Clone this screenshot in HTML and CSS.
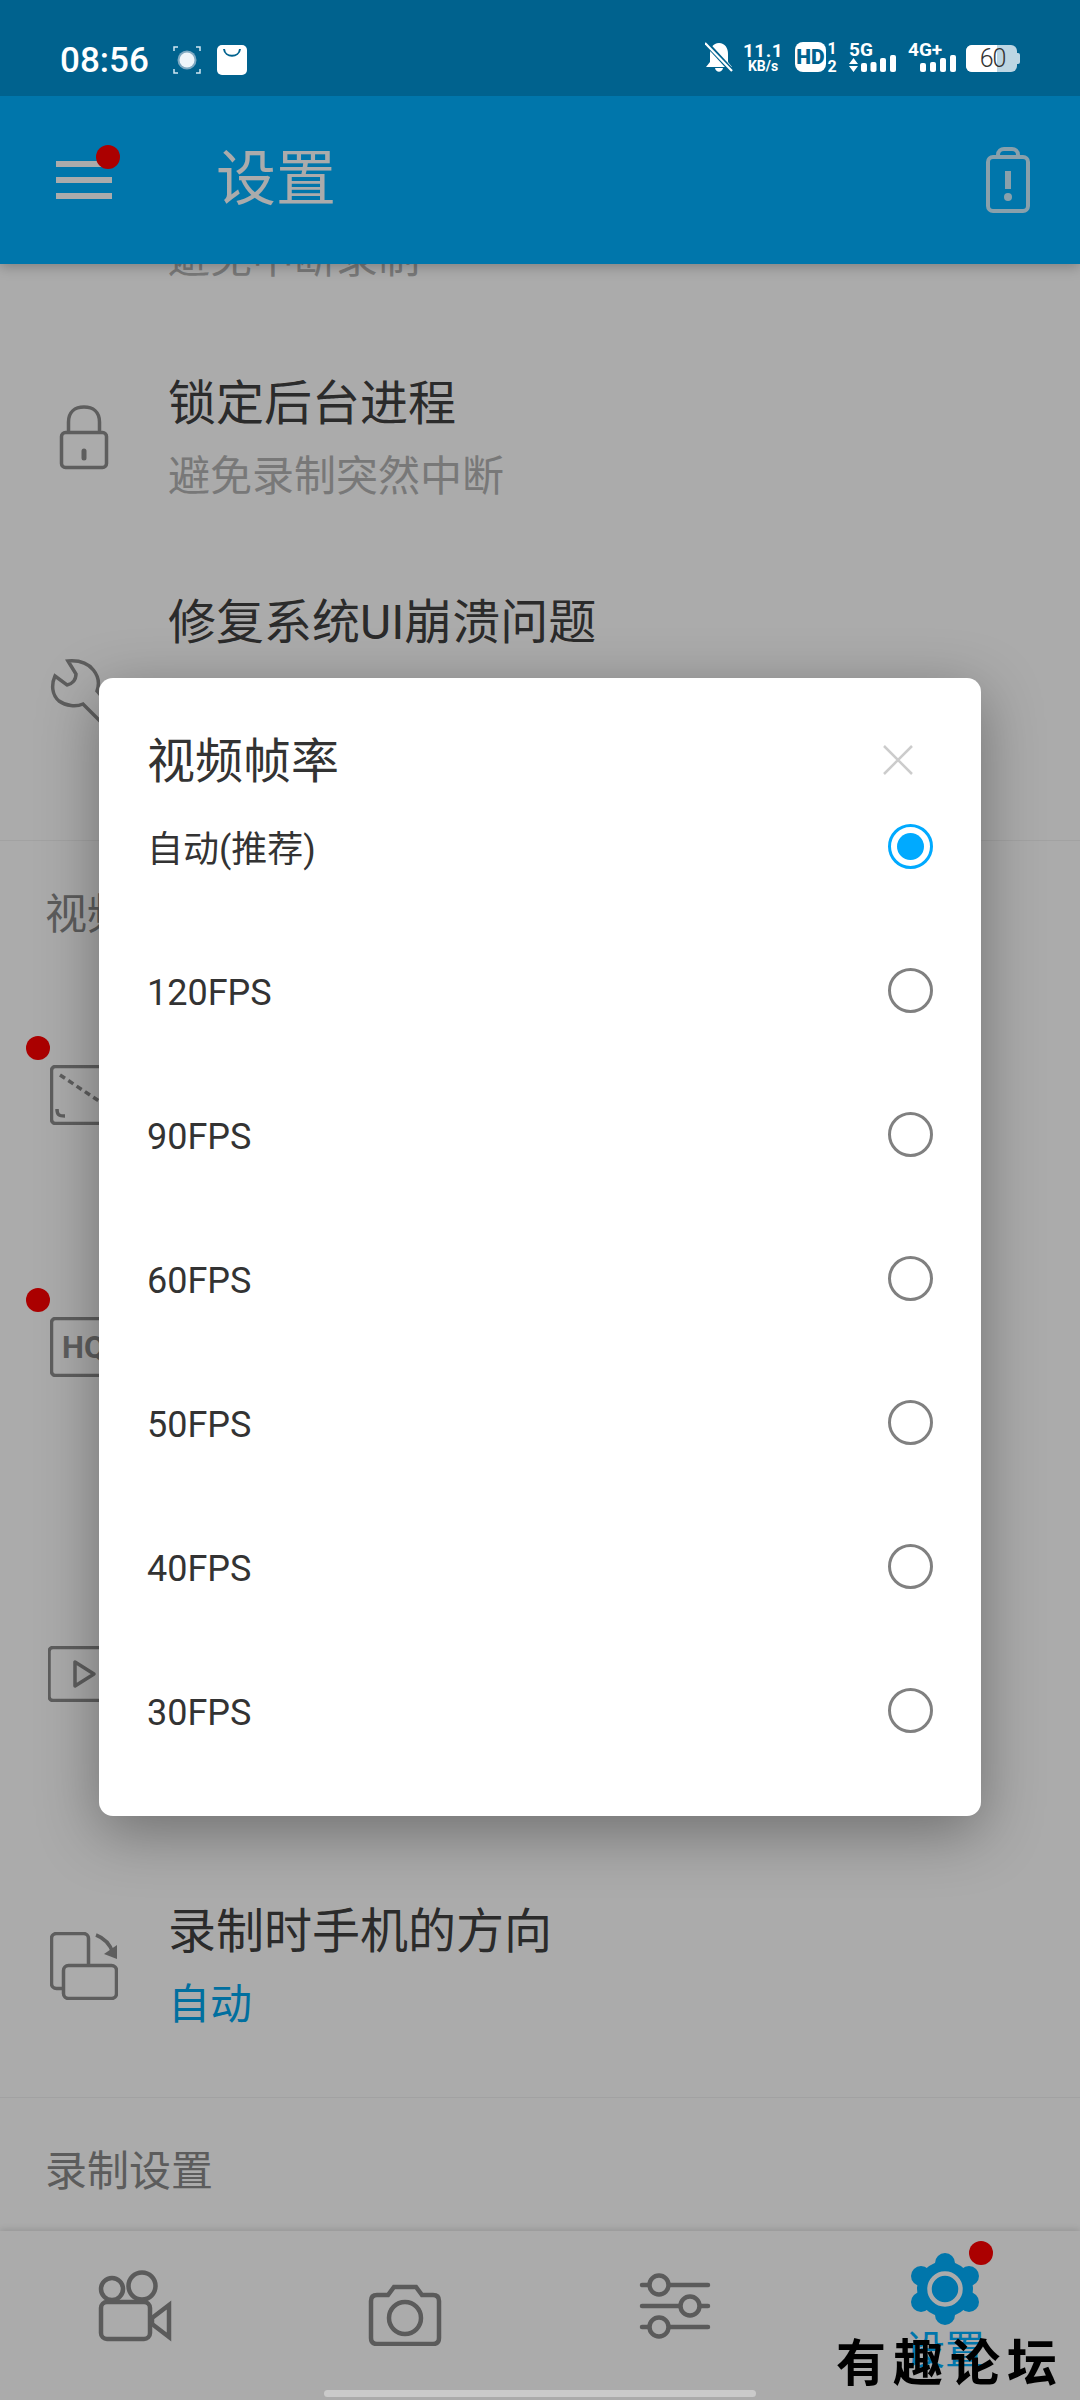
FILE: index.html
```html
<!DOCTYPE html>
<html lang="zh-CN">
<head>
    <meta charset="UTF-8">
    <meta name="viewport" content="width=device-width, initial-scale=1.0">
    <title>设置</title>
    <link rel="stylesheet" href="styles.css">
</head>
<body>
    <div class="page">
        <!-- Status bar stays above the dialog scrim -->
        <div class="status-bar">
            <div class="status-left">
                <span class="clock">08:56</span>
                <svg width="28" height="30" viewBox="0 0 28 30" fill="none">
                    <path d="M1 6V2H5M23 2H27V6M27 24V28H23M5 28H1V24" stroke="#cfe6f2" stroke-width="1.5"/>
                    <circle cx="14" cy="15" r="9.5" fill="#7fa9c2"/>
                    <circle cx="14" cy="15" r="7.5" fill="#eef5fa"/>
                </svg>
                <svg width="30" height="30" viewBox="0 0 30 30">
                    <rect width="30" height="30" rx="5" fill="#fff"/>
                    <path d="M7 4C8 13 22 13 23 4" fill="none" stroke="#00628e" stroke-width="2"/>
                </svg>
            </div>
            <div class="status-right">
                <svg width="28" height="42" viewBox="0 -6 28 42">
                    <path d="M14 1C8 1 5 6 5 12V20L1 25H27L23 20V12C23 6 20 1 14 1ZM10 26C11 31 17 31 18 26Z" fill="#fff"/>
                    <path d="M1 1L27 29" stroke="#00628e" stroke-width="5"/>
                    <path d="M0 1L27 29" stroke="#fff" stroke-width="2.2"/>
                </svg>
                <div class="speed">
                    <span class="speed-value">11.1</span>
                    <span class="speed-unit">KB/s</span>
                </div>
                <svg class="status-hd" width="42" height="42" viewBox="0 -6 42 42">
                    <rect width="31" height="30" rx="8" fill="#fff"/>
                    <text x="15.5" y="22" class="sb-text sb-hd" text-anchor="middle">HD</text>
                    <text x="37" y="12" class="sb-text sb-small" text-anchor="middle">1</text>
                    <text x="37" y="30" class="sb-text sb-small" text-anchor="middle">2</text>
                </svg>
                <svg width="47" height="42" viewBox="0 -6 47 42">
                    <text x="0" y="14" class="sb-text sb-net">5G</text>
                    <path d="M0 22L4.500 16L9 22ZM0 24H9L4.500 30Z" fill="#fff"/>
                    <rect x="12" y="21" width="6" height="9" rx="2" fill="#fff"/>
                    <rect x="21.500" y="20" width="6" height="10" rx="2" fill="#fff"/>
                    <rect x="31" y="16" width="6" height="14" rx="2" fill="#fff"/>
                    <rect x="41" y="13" width="6" height="17" rx="2" fill="#fff"/>
                </svg>
                <svg width="49" height="42" viewBox="0 -6 49 42">
                    <text x="0" y="14" class="sb-text sb-net">4G+</text>
                    <rect x="12" y="21" width="6" height="9" rx="2" fill="#fff"/>
                    <rect x="22" y="20" width="6" height="10" rx="2" fill="#fff"/>
                    <rect x="32" y="16" width="6" height="14" rx="2" fill="#fff"/>
                    <rect x="42" y="13" width="6" height="17" rx="2" fill="#fff"/>
                </svg>
                <div class="battery">
                    <div class="battery-fill"></div>
                    <span class="battery-text">60</span>
                </div>
            </div>
        </div>

        <div class="app-bar">
            <div class="menu-btn">
                <span class="menu-line"></span>
                <span class="menu-line"></span>
                <span class="menu-line"></span>
                <span class="dot dot-menu"></span>
            </div>
            <div class="app-title">设置</div>
            <svg class="battery-warn" width="44" height="66" viewBox="0 0 44 66" fill="none" stroke="#fff" stroke-width="4">
                <rect x="2" y="10" width="40" height="54" rx="5"/>
                <path d="M12 10V8C12 4 15 2 18 2H26C29 2 32 4 32 8V10"/>
                <path d="M22 24V42" stroke-width="6"/>
                <circle cx="22" cy="50" r="4" fill="#fff" stroke="none"/>
            </svg>
        </div>

        <div class="content">
            <div class="list">
                <div class="row row-cut">
                    <div class="row-icon"></div>
                    <div class="row-text">
                        <div class="row-sub">避免中断录制</div>
                    </div>
                </div>

                <div class="row">
                    <svg class="row-icon" width="68" height="68" viewBox="0 0 68 68">
                        <rect x="11.500" y="28.500" width="45" height="35" rx="4"/>
                        <path d="M18.500 28V18C18.500 8 25 3 34 3C43 3 49.500 8 49.500 18V28"/>
                        <path d="M34 47V54" stroke-width="5" stroke-linecap="round"/>
                    </svg>
                    <div class="row-text">
                        <div class="row-title">锁定后台进程</div>
                        <div class="row-sub">避免录制突然中断</div>
                    </div>
                </div>

                <div class="row row-tall row-line">
                    <svg class="row-icon" width="68" height="68" viewBox="0 0 68 68">
                        <path d="M18 2L26 15C26 21 22 25 17 26L5 17C1 26 2 36 9 42C16 47 26 48 33 45L54 66L66 54L47 32C52 18 42 0 18 2Z"/>
                    </svg>
                    <div class="row-text">
                        <div class="row-title">修复系统UI崩溃问题</div>
                        <div class="row-sub">避免系统界面崩溃导致录制中断</div>
                    </div>
                </div>

                <div class="section">视频设置</div>

                <div class="row row-size">
                    <div class="icon-wrap">
                        <svg class="row-icon" width="68" height="60" viewBox="0 0 68 60">
                            <rect x="1.500" y="1.500" width="65" height="57" rx="4"/>
                            <path d="M10 10L58 42" stroke-dasharray="6 4"/>
                            <path d="M7 44C7 50 9 51 15 51"/>
                        </svg>
                        <span class="dot dot-icon"></span>
                    </div>
                </div>

                <div class="row row-quality">
                    <div class="icon-wrap">
                        <svg class="row-icon" width="68" height="60" viewBox="0 0 68 60">
                            <rect x="1.500" y="1.500" width="65" height="57" rx="4"/>
                            <text x="12" y="41" class="hq-text">HQ</text>
                        </svg>
                        <span class="dot dot-icon"></span>
                    </div>
                </div>

                <div class="row row-rate">
                    <svg class="row-icon" width="68" height="56" viewBox="0 0 68 56">
                        <rect x="1" y="1.500" width="65" height="53" rx="4"/>
                        <path d="M27 16V40L46 28Z" stroke-linejoin="round"/>
                    </svg>
                </div>

                <div class="row row-orient row-line">
                    <svg class="row-icon" width="68" height="68" viewBox="0 0 68 68">
                        <rect x="1.500" y="1.500" width="37" height="55" rx="5"/>
                        <rect x="13.500" y="33.500" width="53" height="33" rx="5" class="icon-cover"/>
                        <path d="M46 3C54 6 60 12 63 21"/>
                        <path d="M67 27L54 22L67 13Z" class="icon-solid"/>
                    </svg>
                    <div class="row-text">
                        <div class="row-title">录制时手机的方向</div>
                        <div class="row-sub row-value">自动</div>
                    </div>
                </div>

                <div class="section">录制设置</div>
            </div>
        </div>

        <div class="bottom-nav">
            <div class="nav-item">
                <svg width="80" height="80" viewBox="0 0 80 80" class="nav-icon">
                    <circle cx="17" cy="23" r="11"/>
                    <circle cx="47" cy="20" r="13.500"/>
                    <rect x="6" y="36" width="49" height="37" rx="6"/>
                    <path d="M57 52L74 39V71L57 58Z"/>
                </svg>
            </div>
            <div class="nav-item">
                <svg width="80" height="80" viewBox="0 0 80 80" class="nav-icon">
                    <path d="M12 29H23L29 21H51L57 29H68Q74 29 74 35V72Q74 78 68 78H12Q6 78 6 72V35Q6 29 12 29Z"/>
                    <circle cx="40" cy="52" r="16"/>
                </svg>
            </div>
            <div class="nav-item">
                <svg width="80" height="80" viewBox="0 0 80 80" class="nav-icon">
                    <path d="M7 19H73M7 40H73M7 61H73" stroke-linecap="round"/>
                    <circle cx="24" cy="19" r="9.500"/>
                    <circle cx="55" cy="40" r="9.500"/>
                    <circle cx="24" cy="61" r="9.500"/>
                </svg>
            </div>
            <div class="nav-item nav-active">
                <div class="icon-wrap">
                    <svg width="80" height="80" viewBox="0 0 80 80" class="gear">
                        <circle cx="40" cy="40" r="28"/>
                        <circle cx="40" cy="14" r="10"/>
                        <circle cx="40" cy="66" r="10"/>
                        <circle cx="16" cy="27" r="10"/>
                        <circle cx="64" cy="27" r="10"/>
                        <circle cx="16" cy="53" r="10"/>
                        <circle cx="64" cy="53" r="10"/>
                        <circle cx="40" cy="40" r="15.500" class="gear-ring"/>
                    </svg>
                    <span class="dot dot-gear"></span>
                </div>
                <span class="nav-label">设置</span>
            </div>
        </div>

        <!-- Dialog with its scrim -->
        <div class="scrim">
            <div class="dialog">
                <div class="dialog-head">
                    <span class="dialog-title">视频帧率</span>
                    <svg class="dialog-close" width="30" height="30" viewBox="0 0 30 30">
                        <path d="M1 1L29 29M29 1L1 29" stroke="#ccc" stroke-width="2.500"/>
                    </svg>
                </div>
                <div class="options">
                    <div class="option"><span>自动(推荐)</span><span class="radio radio-on"></span></div>
                    <div class="option option-fps"><span>120FPS</span><span class="radio"></span></div>
                    <div class="option option-fps"><span>90FPS</span><span class="radio"></span></div>
                    <div class="option option-fps"><span>60FPS</span><span class="radio"></span></div>
                    <div class="option option-fps"><span>50FPS</span><span class="radio"></span></div>
                    <div class="option option-fps"><span>40FPS</span><span class="radio"></span></div>
                    <div class="option option-fps"><span>30FPS</span><span class="radio"></span></div>
                </div>
            </div>
        </div>

        <div class="home-bar"></div>
        <div class="watermark">有趣论坛</div>
    </div>
</body>
</html>
```

FILE: styles.css
```css
body {
    margin: 0;
    background: #fff;
    font-family: Roboto, "Noto Sans CJK SC", sans-serif;
}
.page {
    position: relative;
    width: 1080px;
    height: 2400px;
    display: flex;
    flex-direction: column;
    overflow: hidden;
}

/* Status bar */
.status-bar {
    height: 96px;
    box-sizing: border-box;
    padding: 42px 60px 0 60px;
    display: flex;
    justify-content: space-between;
    align-items: flex-start;
    background: #00628e;
    color: #fff;
    position: relative;
    z-index: 3;
}
.status-left {
    display: flex;
    align-items: center;
}
.status-left svg {
    margin-left: 24px;
}
.status-left svg:last-child {
    margin-left: 16px;
}
.clock {
    padding-top: 3px;
    font-size: 35px;
    font-weight: 500;
    line-height: 32px;
}
.status-right {
    display: flex;
    gap: 12px;
    align-items: flex-start;
}
.status-right svg {
    margin-top: -6px;
}
.status-right .status-hd {
    margin-left: 3px;
}
.speed {
    width: 34px;
    margin-left: 1px;
    display: flex;
    flex-direction: column;
    align-items: center;
    font-weight: 700;
}
.speed-value {
    font-size: 19px;
    line-height: 17px;
    letter-spacing: 0.5px;
}
.speed-unit {
    font-size: 14px;
    line-height: 14px;
}
.sb-text {
    font-family: Roboto, sans-serif;
    font-weight: 700;
    fill: #fff;
}
.sb-hd {
    font-size: 21px;
    font-weight: 900;
    fill: #00628e;
}
.sb-small {
    font-size: 16px;
}
.sb-net {
    font-size: 19px;
}
.battery {
    position: relative;
    width: 51px;
    height: 27px;
    margin: 3px 3px 0 -3px;
    border-radius: 6px;
    background: #bdd6e3;
    display: flex;
    align-items: center;
    justify-content: center;
}
.battery::after {
    content: "";
    position: absolute;
    right: -3px;
    top: 8px;
    width: 3px;
    height: 11px;
    border-radius: 0 2px 2px 0;
    background: #bdd6e3;
}
.battery-fill {
    position: absolute;
    left: 0;
    top: 0;
    bottom: 0;
    width: 31px;
    border-radius: 6px 0 0 6px;
    background: #fff;
}
.battery-text {
    position: relative;
    left: 1px;
    font-size: 25px;
    font-weight: 300;
    letter-spacing: -1px;
    color: #333;
}

/* App bar */
.app-bar {
    height: 168px;
    flex-shrink: 0;
    display: flex;
    align-items: center;
    padding: 0 50px 0 56px;
    background: #00b0ff;
    box-shadow: 0 3px 12px rgba(0, 0, 0, 0.25);
    position: relative;
    z-index: 1;
}
.menu-btn {
    position: relative;
    width: 56px;
    display: flex;
    flex-direction: column;
    gap: 10px;
}
.menu-line {
    height: 6px;
    background: #fff;
}
.app-title {
    flex: 1;
    margin-left: 104px;
    font-size: 60px;
    line-height: 72px;
    color: #fff;
}
.battery-warn {
    opacity: 0.8;
    margin-top: 0;
}

/* Red notification dots */
.dot {
    position: absolute;
    width: 24px;
    height: 24px;
    border-radius: 50%;
    background: #f00;
}
.dot-menu {
    top: -16px;
    left: 40px;
}
.dot-icon {
    top: -29px;
    left: -24px;
}
.dot-gear {
    top: -8px;
    left: 64px;
}

/* Settings list behind the dialog */
.content {
    flex: 1;
    min-height: 0;
    overflow: hidden;
}
.list {
    margin-top: -33px;
}
.row {
    display: flex;
    align-items: center;
    gap: 50px;
    padding: 43px 0 41px 50px;
    box-sizing: border-box;
}
.row-cut {
    padding: 0 0 40px 50px;
}
.row-tall {
    padding-bottom: 43px;
}
.row-tall .row-text {
    min-height: 208px;
    align-self: flex-start;
}
.row-tall .row-sub {
    margin-top: 16px;
}
.row-line {
    border-bottom: 1px solid #f2f2f2;
}
.row-size {
    height: 212px;
    padding: 0 0 0 50px;
}
.row-quality {
    height: 292px;
    padding: 0 0 0 50px;
}
.row-rate {
    height: 361px;
    padding: 0 0 0 48px;
}
.row-orient {
    padding: 44px 0 64px 50px;
}
.row-icon {
    width: 68px;
    flex-shrink: 0;
    display: block;
    fill: none;
    stroke: #8c8c8c;
    stroke-width: 3.5;
}
.icon-cover {
    fill: #fff;
}
.icon-solid {
    fill: #8c8c8c;
    stroke: none;
}
.hq-text {
    font-family: Roboto, sans-serif;
    font-size: 31px;
    font-weight: 700;
    fill: #8c8c8c;
    stroke: none;
}
.icon-wrap {
    position: relative;
}
.row-title {
    font-size: 48px;
    line-height: 68px;
    color: #404040;
}
.row-sub {
    margin-top: 11px;
    font-size: 42px;
    line-height: 56px;
    color: #b4b4b4;
}
.row-cut .row-sub {
    margin-top: 0;
}
.row-value {
    color: #00a6ee;
}
.section {
    padding: 46px 0 46px 45px;
    font-size: 42px;
    line-height: 56px;
    color: #8a8a8a;
}

/* Bottom navigation */
.bottom-nav {
    height: 169px;
    flex-shrink: 0;
    display: flex;
    background: #fff;
    box-shadow: 0 -2px 6px rgba(0, 0, 0, 0.12);
    position: relative;
}
.nav-item {
    flex: 1;
    padding-top: 35px;
    display: flex;
    flex-direction: column;
    align-items: center;
}
.nav-active {
    padding-top: 18px;
}
.nav-icon {
    display: block;
    fill: #fff;
    stroke: #888;
    stroke-width: 4.5;
}
.gear {
    display: block;
    fill: #00b0ff;
}
.gear-ring {
    fill: #00b0ff;
    stroke: #fff;
    stroke-width: 4.5;
}
.nav-label {
    margin-top: -2px;
    font-size: 40px;
    line-height: 48px;
    color: #00b0ff;
}

/* Dialog */
.scrim {
    position: absolute;
    top: 96px;
    left: 0;
    right: 0;
    bottom: 0;
    z-index: 2;
    background: rgba(0, 0, 0, 0.33);
    display: flex;
    align-items: center;
    justify-content: center;
}
.dialog {
    width: 882px;
    box-sizing: border-box;
    margin-top: -2px;
    padding: 54px 48px 70px 48px;
    border-radius: 14px;
    background: #fff;
    box-shadow: 0 16px 60px rgba(0, 0, 0, 0.35);
}
.dialog-head {
    display: flex;
    justify-content: space-between;
    align-items: center;
    height: 56px;
    margin-bottom: 22px;
}
.dialog-title {
    padding-top: 4px;
    font-size: 48px;
    line-height: 56px;
    color: #333;
}
.dialog-close {
    margin-right: 20px;
}
.options {
    display: flex;
    flex-direction: column;
    gap: 72px;
}
.option {
    height: 72px;
    display: flex;
    justify-content: space-between;
    align-items: center;
    font-size: 36px;
    color: #333;
}
.option-fps span:first-child {
    padding-top: 5px;
}
.radio {
    width: 45px;
    height: 45px;
    box-sizing: border-box;
    border: 3px solid #808080;
    border-radius: 50%;
    display: flex;
    align-items: center;
    justify-content: center;
}
.radio-on {
    border-color: #0af;
}
.radio-on::after {
    content: "";
    width: 27px;
    height: 27px;
    border-radius: 50%;
    background: #0af;
}

/* Overlays on top of the scrim */
.home-bar {
    position: absolute;
    left: 324px;
    top: 2390px;
    width: 432px;
    height: 7px;
    border-radius: 4px;
    background: #cacaca;
    z-index: 3;
}
.watermark {
    position: absolute;
    left: 836px;
    top: 2334px;
    font-size: 50px;
    line-height: 60px;
    font-weight: 700;
    letter-spacing: 7px;
    white-space: nowrap;
    color: #000;
    z-index: 3;
}
```
